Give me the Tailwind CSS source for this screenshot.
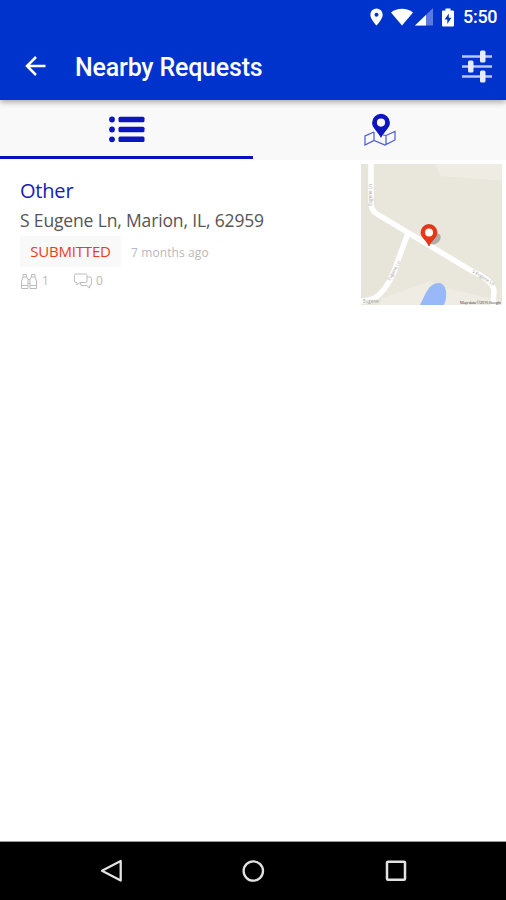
<!DOCTYPE html>
<html lang="en">
<head>
    <meta charset="UTF-8">
    <title>Nearby Requests</title>
    <script src="https://cdn.jsdelivr.net/npm/@tailwindcss/browser@4"></script>
</head>
<body class="bg-white">
    <div class="flex flex-col w-[506px] h-[900px] overflow-hidden font-['Open_Sans',sans-serif]">
        <header class="relative z-10 h-[100px] shrink-0 flex flex-col bg-[#0033cc] text-white shadow-[0_2px_6px_rgba(0,0,0,0.35)] font-['Roboto',sans-serif]">
            <!-- Status bar -->
            <div class="h-[34px] flex items-center justify-end pr-[9px]">
                <svg class="w-[13px] h-[18px]" viewBox="0 0 13 18" fill="currentColor">
                    <path fill-rule="evenodd" d="M6.5 0.5A6.2 6.2 0 0 0 .3 6.7C.3 11 6.5 17.5 6.5 17.5S12.7 11 12.7 6.7A6.2 6.2 0 0 0 6.5 .5ZM6.5 4.7A2 2 0 1 1 6.5 8.7A2 2 0 0 1 6.5 4.7Z"/>
                </svg>
                <svg class="w-[22px] h-[18px] ml-[8px]" viewBox="0 0 22 18" fill="currentColor">
                    <path d="M0 4.5C6-.5 16-.5 22 4.5L11 17.5Z"/>
                </svg>
                <svg class="w-[18px] h-[18px] ml-[2px]" viewBox="0 0 18 18" fill="currentColor">
                    <path d="M0 17.500L18 0V17.500Z" opacity="0.35"/>
                    <path d="M0 17.500L11 7V17.500Z"/>
                </svg>
                <svg class="w-[12px] h-[19px] ml-[9px]" viewBox="0 0 12 19">
                    <path d="M3.500 .5H8.500V2.500H11Q12 2.500 12 3.500V17.500Q12 18.500 11 18.500H1Q0 18.500 0 17.500V3.500Q0 2.500 1 2.500H3.500Z" fill="currentColor"/>
                    <path d="M6.800 5.500L2.600 11.500H5.300V16L9.400 9.800H6.800Z" fill="#0033cc"/>
                </svg>
                <span class="ml-[9px] w-[34px] text-[18px] leading-none font-medium tracking-[-0.3px] whitespace-nowrap">5:50</span>
            </div>
            <!-- Title bar -->
            <div class="h-[66px] flex items-center pl-[25px] pr-[13px]">
                <svg class="w-[21px] h-[20px] mb-[2px]" viewBox="0 0 21 20" fill="none" stroke="currentColor" stroke-width="2.5">
                    <path d="M20.500 10H2M11 1L2 10L11 19"/>
                </svg>
                <h1 class="ml-[29px] text-[25px] leading-none font-medium tracking-[-0.2px] whitespace-nowrap">Nearby Requests</h1>
                <svg class="w-[32px] h-[34px] ml-auto mb-[3px]" viewBox="0 0 32 34">
                    <path d="M1 7.500H31M1 17.500H31M1 27.500H31" stroke="#b9c9f8" stroke-width="2.4"/>
                    <g fill="#e5ecff">
                        <rect x="19" y="1.5" width="5.5" height="12" rx="1.5"/>
                        <rect x="7" y="11.5" width="5.5" height="12" rx="1.5"/>
                        <rect x="19" y="21.5" width="5.5" height="12" rx="1.5"/>
                    </g>
                </svg>
            </div>
        </header>

        <!-- Tabs -->
        <nav class="h-[60px] shrink-0 grid grid-cols-2 bg-[#f9f9f9]">
            <div class="flex justify-center pt-[16px] border-b-[3px] border-[#0b12bd] mb-[1px]">
                <svg class="w-[36px] h-[27px]" viewBox="0 0 36 27" fill="#0b16bf">
                    <circle cx="3" cy="3.5" r="2.9"/>
                    <circle cx="3" cy="13.5" r="2.9"/>
                    <circle cx="3" cy="23.3" r="2.9"/>
                    <rect x="9.5" y=".8" width="26" height="5.4" rx="1.5"/>
                    <rect x="9.5" y="10.8" width="26" height="5.4" rx="1.5"/>
                    <rect x="9.5" y="20.6" width="26" height="5.4" rx="1.5"/>
                </svg>
            </div>
            <div class="flex justify-center pt-[13px]">
                <svg class="w-[34px] h-[34px]" viewBox="0 0 34 34">
                    <path d="M11 19L2 23V32L11 27.500L22 32L32 27V18.500L23 22.500L20 22M11 19V27.500M23 22.500V32" fill="none" stroke="#4a59cf" stroke-width="1.2"/>
                    <path fill="#0b16bf" fill-rule="evenodd" d="M18 .8A8.900 8.900 0 0 0 9.100 9.700C9.100 15 14.500 18 18 25C21.500 18 26.900 15 26.900 9.700A8.900 8.900 0 0 0 18 .8ZM18 5.500A4.100 4.100 0 1 1 18 13.700A4.100 4.100 0 0 1 18 5.500Z"/>
                </svg>
            </div>
        </nav>

        <!-- Request list -->
        <main class="flex-1">
            <article class="flex justify-between pl-[20px] pr-[4px] pt-[3px]">
                <div class="pt-[14px]">
                    <h2 class="text-[20px] leading-[28px] tracking-[-0.2px] text-[#1420b8]">Other</h2>
                    <p class="mt-[1px] text-[17.5px] leading-[28px] tracking-[-0.15px] text-[#555555] whitespace-nowrap">S Eugene Ln, Marion, IL, 62959</p>
                    <div class="mt-[2px] flex items-center">
                        <span class="w-[101px] h-[31px] flex items-center justify-center bg-[#f9f9f9] text-[15px] tracking-[-0.2px] text-[#f03a17]">SUBMITTED</span>
                        <span class="ml-[10px] pt-[2px] text-[12px] tracking-[0.1px] text-[#b9b9b9]">7 months ago</span>
                    </div>
                    <div class="mt-[4px] h-[20px] flex items-center text-[12px] text-[#b9b9b9]">
                        <svg class="w-[18px] h-[17px]" viewBox="0 0 18 17" fill="none" stroke="#bdbdbd" stroke-width="1">
                            <path d="M3 4V1.500H6.500V4L8 6V15.500H1.500V8ZM15 4V1.500H11.500V4L10 6V15.500H16.500V8ZM8 6.500H10M8 10.500H10M1.500 12.500H8M10 12.500H16.500M3 4H6.500M11.500 4H15"/>
                        </svg>
                        <span class="ml-[4px]">1</span>
                        <svg class="w-[18px] h-[16px] ml-[25px]" viewBox="0 0 18 16" fill="none" stroke="#bdbdbd" stroke-width="1">
                            <path d="M2 1H11.500Q13 1 13 2.500V8Q13 9.500 11.500 9.500H6L3 12V9.500H2Q.5 9.500 .5 8V2.500Q.5 1 2 1Z"/>
                            <path d="M13 4H16Q17.500 4 17.500 5.500V11Q17.500 12.500 16 12.500H15.500V15L12.500 12.500H8Q6.500 12.500 6.500 11V9.500"/>
                        </svg>
                        <span class="ml-[4px]">0</span>
                    </div>
                </div>

                <svg class="w-[141px] h-[141px] mt-[0.5px] mr-[0.5px]" viewBox="0 0 141 141">
                    <rect width="141" height="141" fill="#e9e6db"/>
                    <path d="M74 0L79 12L141 17V0Z" fill="#efece3"/>
                    <path d="M22 134L69 117L79 123L141 137V141H18Z" fill="#efece3"/>
                    <path d="M0 0V133L18 128L40 98L48 70L11 48V0Z" fill="#e7e5da"/>
                    <path d="M59 141C64 132 67 119 78 119C86 120 87 132 83 141Z" fill="#98b8f8"/>
                    <!-- Roads -->
                    <g fill="none" stroke="#ffffff">
                        <path d="M10 0V39Q10 46 16 50L111 107Q132 116 133 127L132 141" stroke-width="5.5"/>
                        <path d="M47 69L36 99Q30 119 18 131Q11 137 0 137" stroke-width="5.5"/>
                    </g>
                    <g fill="#999999" font-family="Open Sans, sans-serif" font-size="4.5">
                        <text transform="translate(11 42) rotate(-90)">Eugene Ln</text>
                        <text transform="translate(29 117) rotate(-61)">Eugene Ln</text>
                        <text transform="translate(111 108) rotate(33)">S Eugene Ln</text>
                        <text x="2" y="139">Eugene</text>
                    </g>
                    <text x="99" y="140.3" font-family="Open Sans, sans-serif" font-size="4.2" fill="#444444" textLength="41">Map data ©2015 Google</text>
                    <!-- Marker -->
                    <ellipse cx="74" cy="75" rx="6.5" ry="4.5" fill="#000000" opacity="0.25" transform="rotate(-40 74 75)"/>
                    <path d="M68 60.500A8 8 0 0 0 60 68.500C60 73.500 65.500 76 68 82C70.500 76 76 73.500 76 68.500A8 8 0 0 0 68 60.500Z" fill="#e93615" stroke="#c92c0f" stroke-width=".7"/>
                    <circle cx="68" cy="68.500" r="4" fill="#ffffff"/>
                </svg>
            </article>
        </main>

        <!-- Android navigation bar -->
        <footer class="h-[59px] shrink-0 border-t border-[#999999] bg-black flex justify-between pl-[100px] pr-[98px] pt-[17px]">
            <svg class="w-[24px] h-[24px]" viewBox="0 0 24 24" fill="none" stroke="#e2e2e2" stroke-width="2.3" stroke-linejoin="round">
                <path d="M20.700 2V21.500L2 11.800Z"/>
            </svg>
            <svg class="w-[24px] h-[24px]" viewBox="0 0 24 24" fill="none" stroke="#e2e2e2" stroke-width="2.3">
                <circle cx="11.300" cy="12" r="9.700"/>
            </svg>
            <svg class="w-[24px] h-[24px]" viewBox="0 0 24 24" fill="none" stroke="#e2e2e2" stroke-width="2.5">
                <rect x="3" y="2.8" width="18" height="18" rx="1"/>
            </svg>
        </footer>
    </div>
</body>
</html>
